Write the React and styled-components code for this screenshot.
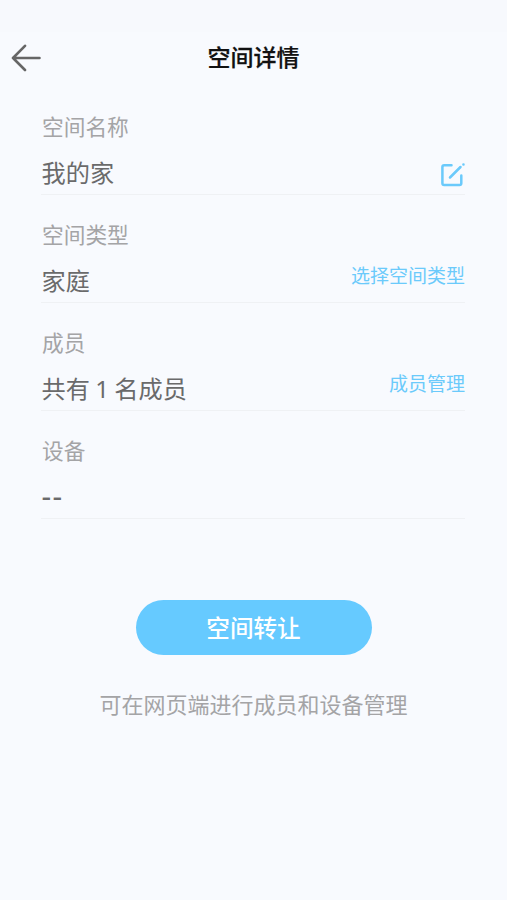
import React from "react";
import styled, { createGlobalStyle } from "styled-components";

const GlobalStyle = createGlobalStyle`
  * { box-sizing: border-box; }
  body { margin: 0; background: #f8fafe; }
`;

const Screen = styled.main`
  min-height: 900px;
  background: #f8fafe;
  font-family: "Noto Sans", "Noto Sans CJK SC", sans-serif;
  color: #6a6a6b;
`;

const StatusArea = styled.div`
  height: 32px;
  background: #f7f9fd;
`;

const Header = styled.header`
  display: grid;
  grid-template-columns: 52px 1fr 52px;
  align-items: center;
  height: 52px;
`;

const BackButton = styled.button`
  display: flex;
  padding: 0 0 0 10px;
  border: 0;
  background: none;
  color: #666;
`;

const Title = styled.h1`
  margin: 0 0 2px;
  text-align: center;
  font-size: 23px;
  line-height: 34px;
  font-weight: 500;
  -webkit-text-stroke: 0.25px currentColor;
  color: #111;
`;

const Fields = styled.section`
  padding: 3px 42px 0 41px;
`;

const Field = styled.div`
  height: 108px;
  padding-top: 24px;
  border-bottom: 1px solid #eff1f4;
`;

const Label = styled.div`
  height: 32px;
  padding-left: 1px;
  font-size: 21.7px;
  line-height: 32px;
  color: #a4a4a6;
`;

const ValueRow = styled.div`
  display: flex;
  justify-content: space-between;
  height: 50px;
  padding-top: 12px;
`;

const Value = styled.span`
  padding-top: ${({ $empty }) => ($empty ? "0" : "1px")};
  padding-left: 0.5px;
  font-size: ${({ $empty }) => ($empty ? "30px" : "24.2px")};
  line-height: 34px;
  letter-spacing: ${({ $empty }) => ($empty ? "1.4px" : "normal")};
  word-spacing: -1px;
`;

const Action = styled.button`
  height: 28px;
  margin-top: ${({ $icon }) => ($icon ? "7px" : "-1px")};
  margin-right: ${({ $icon }) => ($icon ? "-1px" : "0")};
  padding: 0;
  border: 0;
  background: none;
  font: 19px/28px "Noto Sans", "Noto Sans CJK SC", sans-serif;
  color: #6bcafb;
`;

const Footer = styled.footer`
  display: flex;
  flex-direction: column;
  align-items: center;
  padding-top: 80.5px;
`;

const TransferButton = styled.button`
  width: 236px;
  height: 55px;
  padding: 1px 0 0;
  border: 0;
  border-radius: 28px;
  background: #66caff;
  font: 500 23.6px/54px "Noto Sans", "Noto Sans CJK SC", sans-serif;
  color: #fff;
`;

const Hint = styled.p`
  margin: 33.5px 0 0;
  font-size: 22px;
  line-height: 32px;
  color: #a4a4a6;
`;

const BackIcon = () => (
  <svg width="32" height="28" viewBox="0 0 32 28" fill="none" stroke="currentColor" strokeWidth="2.6" strokeLinecap="round" strokeLinejoin="round">
    <path d="M15 1.8 3 14l12 12M3 14H29.5" />
  </svg>
);

const EditIcon = () => (
  <svg width="26" height="26" viewBox="0 0 26 26" fill="none" stroke="currentColor" strokeWidth="2.5" strokeLinecap="round" strokeLinejoin="round">
    <path d="M11.5 3.3H4.2Q2.4 3.3 2.4 5.1V21.2Q2.4 23 4.2 23H19.5Q21.3 23 21.3 21.2V13.5" />
    <path d="m10 15.5 10.5-10.5M23.4 2.5h.1" />
  </svg>
);

const fields = [
  { label: "空间名称", value: "我的家", action: <EditIcon />, icon: true },
  { label: "空间类型", value: "家庭", action: "选择空间类型" },
  { label: "成员", value: "共有 1 名成员", action: "成员管理" },
  { label: "设备", value: "--", empty: true },
];

export default function App() {
  return (
    <Screen>
      <GlobalStyle />
      <StatusArea />
      <Header>
        <BackButton aria-label="返回"><BackIcon /></BackButton>
        <Title>空间详情</Title>
      </Header>
      <Fields>
        {fields.map(({ label, value, action, icon, empty }) => (
          <Field key={label}>
            <Label>{label}</Label>
            <ValueRow>
              <Value $empty={empty}>{value}</Value>
              {action && <Action $icon={icon} aria-label={icon ? "编辑空间名称" : undefined}>{action}</Action>}
            </ValueRow>
          </Field>
        ))}
      </Fields>
      <Footer>
        <TransferButton>空间转让</TransferButton>
        <Hint>可在网页端进行成员和设备管理</Hint>
      </Footer>
    </Screen>
  );
}
